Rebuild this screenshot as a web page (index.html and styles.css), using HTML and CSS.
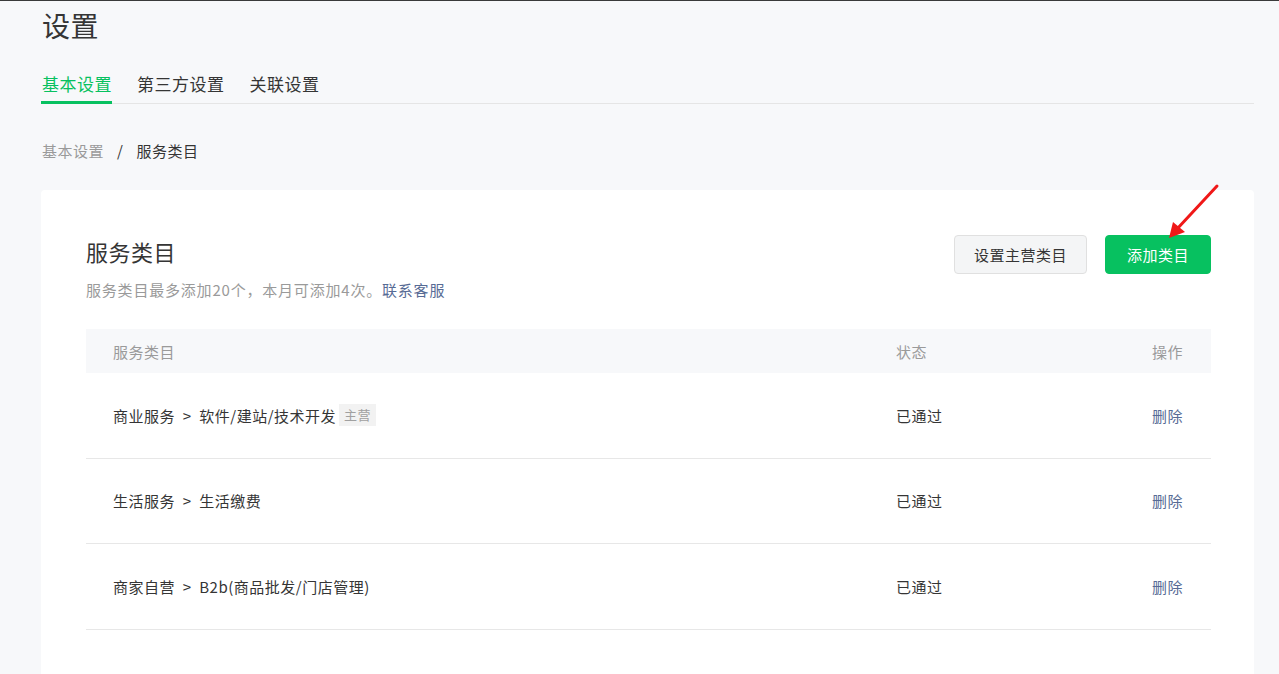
FILE: index.html
```html
<!DOCTYPE html>
<html lang="zh-CN">
<head>
    <meta charset="UTF-8">
    <meta name="viewport" content="width=device-width, initial-scale=1.0">
    <title>设置</title>
    <link rel="stylesheet" href="styles.css">
</head>
<body>

    <div class="page">
        <h1 class="page-title">设置</h1>

        <div class="tabs">
            <div class="tab active">基本设置</div>
            <div class="tab">第三方设置</div>
            <div class="tab">关联设置</div>
        </div>

        <div class="breadcrumb">
            <span class="crumb-link">基本设置</span>
            <span class="crumb-sep">/</span>
            <span class="crumb-current">服务类目</span>
        </div>

        <div class="card">
            <div class="card-head">
                <div class="card-info">
                    <h2 class="card-title">服务类目</h2>
                    <p class="card-desc">服务类目最多添加20个，本月可添加4次。<a class="link">联系客服</a></p>
                </div>
                <div class="card-actions">
                    <button class="btn btn-default">设置主营类目</button>
                    <button class="btn btn-primary">添加类目</button>
                    <!-- annotation arrow -->
                    <svg class="arrow" width="60" height="60" viewBox="0 0 60 60">
                        <line x1="54" y1="4" x2="14" y2="47" stroke="#f01818" stroke-width="3" stroke-linecap="round"/>
                        <polygon points="6,56 10,40 22,50" fill="#f01818"/>
                    </svg>
                </div>
            </div>

            <div class="table">
                <div class="row row-head">
                    <div class="col-name">服务类目</div>
                    <div class="col-status">状态</div>
                    <div class="col-op">操作</div>
                </div>
                <div class="row">
                    <div class="col-name">商业服务 &nbsp;&gt;&nbsp; 软件/建站/技术开发<span class="tag">主营</span></div>
                    <div class="col-status">已通过</div>
                    <div class="col-op"><a class="link">删除</a></div>
                </div>
                <div class="row">
                    <div class="col-name">生活服务 &nbsp;&gt;&nbsp; 生活缴费</div>
                    <div class="col-status">已通过</div>
                    <div class="col-op"><a class="link">删除</a></div>
                </div>
                <div class="row">
                    <div class="col-name">商家自营 &nbsp;&gt;&nbsp; B2b(商品批发/门店管理)</div>
                    <div class="col-status">已通过</div>
                    <div class="col-op"><a class="link">删除</a></div>
                </div>
            </div>
        </div>
    </div>

</body>
</html>
```

FILE: styles.css
```css
* {
    box-sizing: border-box;
    margin: 0;
    padding: 0;
}

body {
    font-family: "Noto Sans CJK SC", "Noto Sans", sans-serif;
    background-color: #f7f8fa;
    color: #353535;
    letter-spacing: 0.5px;
    border-top: 1px solid #3a3a3a;
    height: 674px;
    overflow: hidden;
}

.page {
    padding: 0 25px 0 41px;
}

.page-title {
    font-size: 28px;
    font-weight: normal;
    line-height: 48px;
    color: #353535;
    padding-left: 1px;
    letter-spacing: 0.5px;
}

.tabs {
    display: flex;
    gap: 24px;
    margin-top: 18px;
    border-bottom: 1px solid #e5e5e5;
}

.tab {
    font-size: 17px;
    line-height: 34px;
    padding-left: 1px;
    border-bottom: 3px solid transparent;
    margin-bottom: -1px;
}

.tab.active {
    color: #07c160;
    border-bottom-color: #07c160;
}

.breadcrumb {
    display: flex;
    align-items: center;
    font-size: 15px;
    margin-top: 35px;
    line-height: 24px;
    padding-left: 1px;
}

.crumb-link {
    color: #9a9a9a;
}

.crumb-sep {
    margin: 0 13px;
    color: #353535;
}

.card {
    margin-top: 27px;
    background: #fff;
    border-radius: 4px;
    padding: 43px 43px 40px 45px;
    height: 520px;
}

.card-head {
    display: flex;
    justify-content: space-between;
    align-items: flex-start;
}

.card-title {
    font-size: 22px;
    font-weight: normal;
    line-height: 36px;
}

.card-desc {
    margin-top: 9px;
    font-size: 15px;
    letter-spacing: 0.8px;
    color: #9a9a9a;
    line-height: 24px;
}

.link {
    color: #576b95;
    text-decoration: none;
}

.card-actions {
    position: relative;
    display: flex;
    gap: 18px;
    margin-top: 2px;
}

.btn {
    font-family: inherit;
    font-size: 15px;
    letter-spacing: 0.5px;
    height: 39px;
    border-radius: 4px;
    padding: 0 18px;
    cursor: pointer;
}

.btn-default {
    background: #f4f5f6;
    border: 1px solid #e0e0e0;
    color: #353535;
    padding: 0 19px;
}

.btn-primary {
    background: #07c160;
    border: 1px solid #07c160;
    color: #fff;
    padding: 0 21px;
}

.arrow {
    position: absolute;
    right: -12px;
    top: -53px;
}

.table {
    margin-top: 27px;
}

.row {
    display: flex;
    align-items: center;
    height: 85.5px;
    padding: 0 28px 0 27px;
    font-size: 15px;
    border-bottom: 1px solid #e7e7e7;
}

.row-head {
    height: 44px;
    background: #f7f8fa;
    color: #9a9a9a;
    border-bottom: none;
}

.col-name {
    flex: 1;
    display: flex;
    align-items: center;
}

.col-status {
    width: 207px;
}

.col-op {
    width: 80px;
    text-align: right;
}

.tag {
    display: inline-block;
    margin-left: 3px;
    padding: 0 5px;
    background: #f2f2f2;
    color: #a0a0a0;
    font-size: 13px;
    line-height: 22px;
}
```
